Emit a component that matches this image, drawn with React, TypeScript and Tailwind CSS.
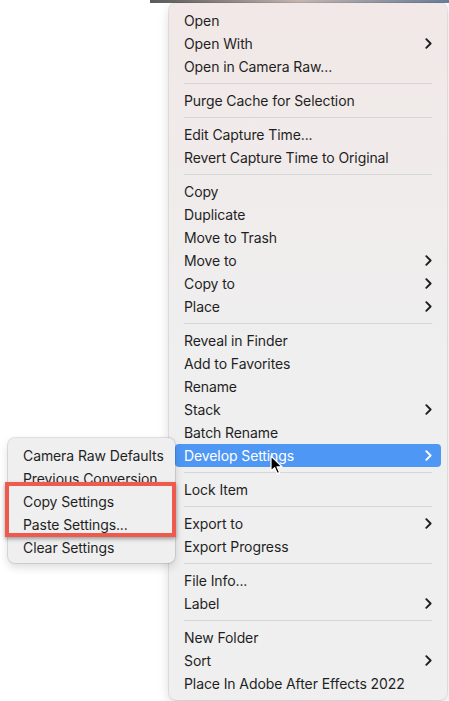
import React from "react";

type Item = { label: string; sub?: boolean; active?: boolean } | "sep";

const items: Item[] = [
  { label: "Open" },
  { label: "Open With", sub: true },
  { label: "Open in Camera Raw..." },
  "sep",
  { label: "Purge Cache for Selection" },
  "sep",
  { label: "Edit Capture Time..." },
  { label: "Revert Capture Time to Original" },
  "sep",
  { label: "Copy" },
  { label: "Duplicate" },
  { label: "Move to Trash" },
  { label: "Move to", sub: true },
  { label: "Copy to", sub: true },
  { label: "Place", sub: true },
  "sep",
  { label: "Reveal in Finder" },
  { label: "Add to Favorites" },
  { label: "Rename" },
  { label: "Stack", sub: true },
  { label: "Batch Rename" },
  { label: "Develop Settings", sub: true, active: true },
  "sep",
  { label: "Lock Item" },
  "sep",
  { label: "Export to", sub: true },
  { label: "Export Progress" },
  "sep",
  { label: "File Info..." },
  { label: "Label", sub: true },
  "sep",
  { label: "New Folder" },
  { label: "Sort", sub: true },
  { label: "Place In Adobe After Effects 2022" },
];

const sub = [
  "Camera Raw Defaults",
  "Previous Conversion",
  "Copy Settings",
  "Paste Settings...",
  "Clear Settings",
];

function Chevron({ white }: { white?: boolean }) {
  return (
    <svg width="7" height="11" viewBox="0 0 7 11" className="shrink-0">
      <path
        d="M1.3 1.2 L5.6 5.5 L1.3 9.8"
        fill="none"
        stroke={white ? "#ffffff" : "#1e1e1e"}
        strokeWidth="1.9"
        strokeLinecap="round"
        strokeLinejoin="round"
      />
    </svg>
  );
}

function Cursor() {
  return (
    <svg width="13" height="20" viewBox="0 0 13 20">
      <path
        d="M1 1 L1 16 L4.6 12.6 L7.2 18.6 L9.6 17.6 L7 11.8 L12 11.8 Z"
        fill="#000"
        stroke="#fff"
        strokeWidth="1.2"
        strokeLinejoin="round"
      />
    </svg>
  );
}

export default function App() {
  return (
    <div
      className="relative w-[449px] h-[701px] bg-white overflow-hidden text-[14px] text-[#1f1f1f]"
      style={{ fontFamily: "Inter, 'Liberation Sans', sans-serif" }}
    >
      {/* background strip behind top of menu */}
      <div className="h-[3px] ml-[150px] bg-gradient-to-r from-[#5a5a5a] via-[#c9b9b4] to-[#6b7f9a]" />
      {/* main menu */}
      <div className="ml-[169px] w-[278px] rounded-[7px] bg-[#efefef] bg-gradient-to-b from-[#f1e8e7] via-[#efefef] to-[#efefef] shadow-[0_0_0_1px_rgba(0,0,0,0.08),0_4px_12px_rgba(0,0,0,0.15)] pt-[6px] pb-[5px] px-[6px]">
        {items.map((it, i) =>
          it === "sep" ? (
            <div key={i} className="h-[11px] flex items-center px-[9px]">
              <div className="h-px w-full bg-[#d6d6d6]" />
            </div>
          ) : (
            <div
              key={i}
              className={
                "h-[23px] flex items-center justify-between pl-[9px] pr-[9px] rounded-[4px] " +
                (it.active ? "bg-[#4f97f5] text-white" : "")
              }
            >
              <span className="tracking-[-0.1px]">{it.label}</span>
              {it.sub && <Chevron white={it.active} />}
            </div>
          )
        )}
      </div>

      {/* cursor */}
      <div className="absolute left-[270px] top-[455px]">
        <Cursor />
      </div>

      {/* submenu */}
      <div className="absolute left-[8px] top-[438px] w-[167px] rounded-[7px] bg-[#efefef] shadow-[0_0_0_1px_rgba(0,0,0,0.1),0_4px_10px_rgba(0,0,0,0.15)] pt-[6px] pb-[4px] px-[6px]">
        {sub.map((s) => (
          <div key={s} className="h-[23px] flex items-center pl-[9px]">
            <span className="tracking-[-0.1px]">{s}</span>
          </div>
        ))}
      </div>

      {/* red highlight box */}
      <div className="absolute left-[5px] top-[482px] w-[171px] h-[55px] border-[4px] border-[#ee5a4d] shadow-[0_2px_4px_rgba(0,0,0,0.35)]" />
    </div>
  );
}
